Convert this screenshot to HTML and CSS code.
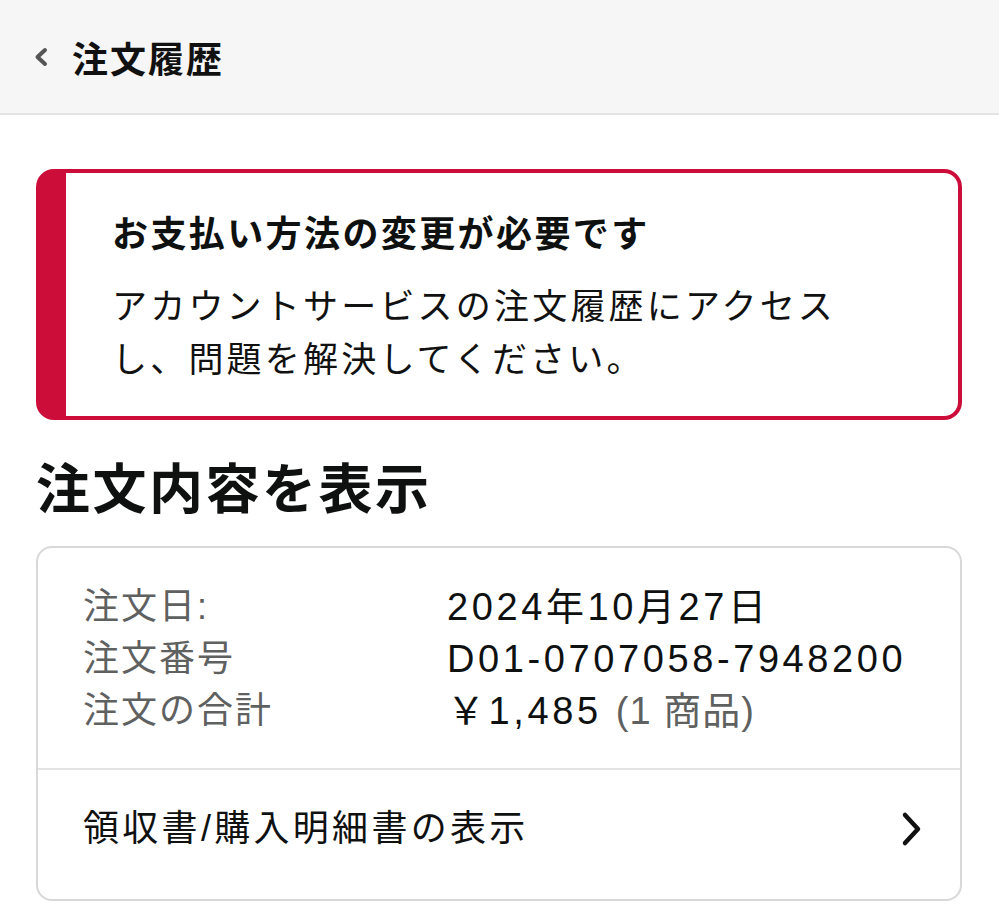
FILE: index.html
```html
<!DOCTYPE html>
<html lang="ja">
<head>
    <meta charset="UTF-8">
    <meta name="viewport" content="width=device-width, initial-scale=1.0">
    <title>注文履歴</title>
    <link rel="stylesheet" href="styles.css">
</head>
<body>

<div class="topbar">
    <a class="back" href="#">
        <svg width="18" height="24" viewBox="0 0 18 24"><path d="M13 5 L5.5 12 L13 19" fill="none" stroke="#555" stroke-width="4" stroke-linecap="round" stroke-linejoin="round"/></svg>
    </a>
    <h1>注文履歴</h1>
</div>

<div class="page">
    <div class="alert">
        <h3>お支払い方法の変更が必要です</h3>
        <p>アカウントサービスの注文履歴にアクセスし、問題を解決してください。</p>
    </div>

    <h2>注文内容を表示</h2>

    <div class="card">
        <div class="summary">
            <span class="label">注文日:</span>
            <span class="value">2024年10月27日</span>
            <span class="label">注文番号</span>
            <span class="value">D01-0707058-7948200</span>
            <span class="label">注文の合計</span>
            <span class="value">￥1,485 <span class="muted">(1 商品)</span></span>
        </div>
        <a class="link-row" href="#">
            <span>領収書/購入明細書の表示</span>
            <svg width="24" height="36" viewBox="0 0 24 36"><path d="M5 4 L18 18 L5 32" fill="none" stroke="#111" stroke-width="4.5" stroke-linecap="round" stroke-linejoin="round"/></svg>
        </a>
    </div>
</div>

</body>
</html>
```

FILE: styles.css
```css
body {
    margin: 0;
    font-family: "Liberation Sans", "Noto Sans CJK JP", sans-serif;
    color: #0f1111;
    background-color: #fff;
}
.topbar {
    height: 113px;
    display: flex;
    align-items: center;
    padding-left: 32px;
    background-color: #f6f6f6;
    border-bottom: 2px solid #e4e4e4;
}
.back {
    display: flex;
    margin-right: 22px;
}
.topbar h1 {
    margin: 0;
    font-size: 36px;
    letter-spacing: 2px;
    font-weight: bold;
    color: #111;
}
.page {
    padding: 54px 37px 0 36px;
}
.alert {
    border: 4px solid #cc0c39;
    border-left-width: 30px;
    border-radius: 18px;
    padding: 38px 40px 30px 46px;
}
.alert h3 {
    margin: 0;
    font-size: 36px;
    line-height: 48px;
    letter-spacing: 2.4px;
    font-weight: bold;
}
.alert p {
    margin: 21px 0 0;
    max-width: 750px;
    font-size: 35px;
    line-height: 53px;
    letter-spacing: 3.2px;
    color: #111;
}
h2 {
    margin: 38px 0 24px 0;
    font-size: 54px;
    line-height: 64px;
    letter-spacing: 2.5px;
    font-weight: bold;
}
.card {
    border: 2px solid #d8d8d8;
    border-radius: 16px;
}
.summary {
    display: grid;
    grid-template-columns: 364px 1fr;
    padding: 33px 45px 31px;
    border-bottom: 2px solid #e3e3e3;
}
.label {
    font-size: 36px;
    line-height: 52px;
    letter-spacing: 2px;
    color: #5f6161;
}
.value {
    font-size: 38px;
    line-height: 52px;
    letter-spacing: 3.6px;
    color: #0f1111;
}
.muted {
    color: #5f6161;
    letter-spacing: 1px;
}
.link-row {
    display: flex;
    align-items: center;
    justify-content: space-between;
    padding: 33px 36px 44px 45px;
    text-decoration: none;
    color: #0f1111;
    font-size: 36px;
    line-height: 52px;
    letter-spacing: 3.3px;
}
```
